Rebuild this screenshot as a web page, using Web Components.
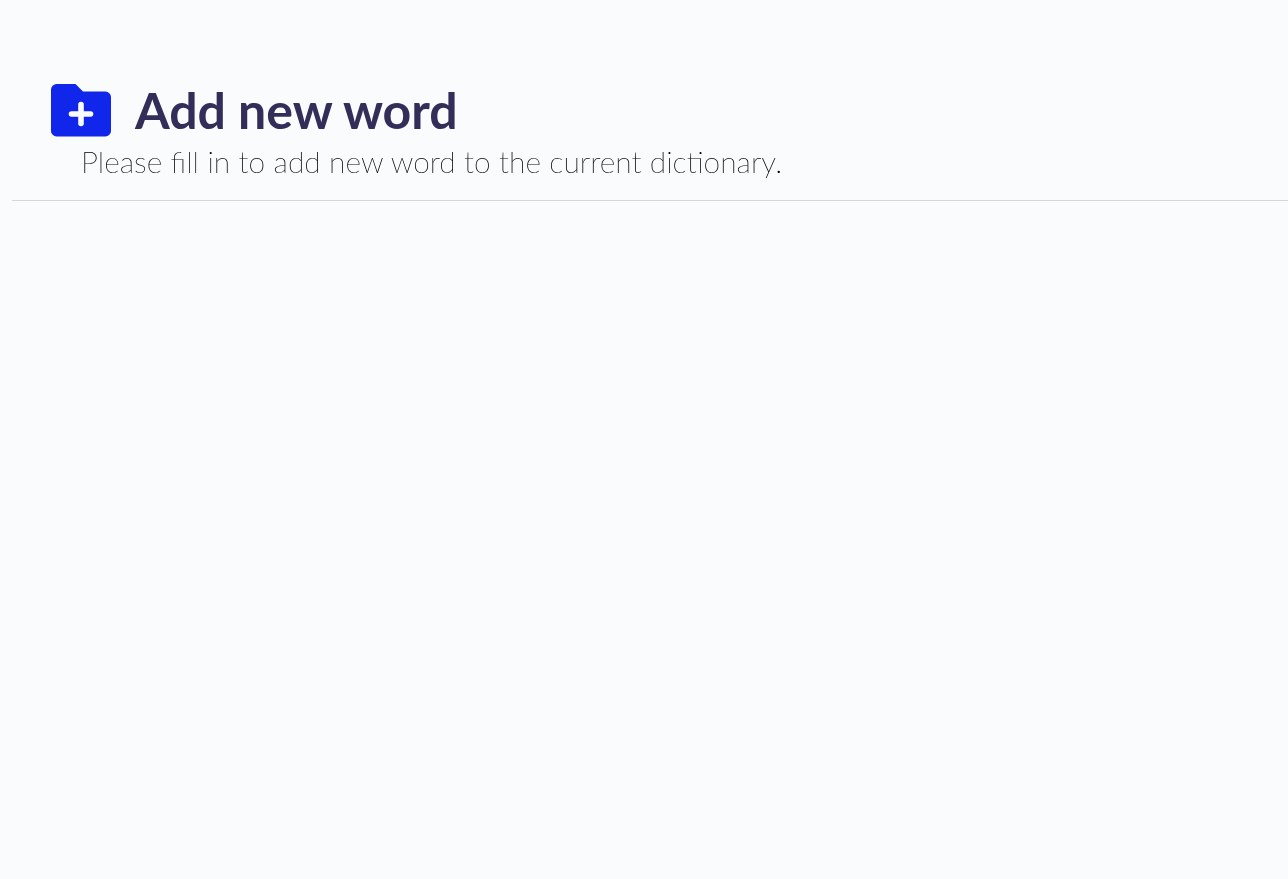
<!DOCTYPE html>
<html lang="en">
<head>
<meta charset="utf-8">
<title>Add new word</title>
<style>
  body { margin: 0; background: #fafbfd; font-family: Lato, sans-serif; }
</style>
</head>
<body>
<word-page>
  <page-header>
    <folder-plus-icon slot="icon"></folder-plus-icon>
    <span slot="title">Add new word</span>
    <span slot="subtitle">Please fill in to add new word to the current dictionary.</span>
  </page-header>
</word-page>
<script>
  const define = (name, html) => customElements.define(name, class extends HTMLElement {
    constructor() {
      super();
      this.attachShadow({ mode: "open" }).innerHTML = html;
    }
  });

  define("word-page", `
    <style>
      :host { display: block; min-height: 100vh; box-sizing: border-box; padding: 80px 0 0 12px; }
    </style>
    <main><slot></slot></main>`);

  define("folder-plus-icon", `
    <style>
      :host { display: block; width: 60px; height: 53px; }
      svg { display: block; width: 100%; height: 100%; }
    </style>
    <svg viewBox="0 0 60 53" aria-hidden="true">
      <path fill="#1026eb" d="M5.600 0H24.500L32 7.500H54.400A5.600 5.600 0 0 1 60 13.100V46.900A5.600 5.600 0 0 1 54.400 52.500H5.600A5.600 5.600 0 0 1 0 46.900V5.600A5.600 5.600 0 0 1 5.600 0Z"/>
      <path stroke="#fafbfd" stroke-width="5.600" stroke-linecap="round" d="M20.500 30H39.500M30 20.500V39.500"/>
    </svg>`);

  define("page-header", `
    <style>
      :host { display: block; border-bottom: 1px solid #d6d7d9; padding-bottom: 18px; }
      header { will-change: transform; }
      .heading { display: flex; align-items: center; gap: 24px; padding-left: 39px; }
      h1 { margin: 0; color: #332e59; font-size: 50px; line-height: 60px; font-weight: 700; }
      p { margin: 0; padding-left: 69px; color: #000; font-family: "Lato Thin", Lato, sans-serif; font-size: 30px; line-height: 42px; }
    </style>
    <header>
      <div class="heading"><slot name="icon"></slot><h1><slot name="title"></slot></h1></div>
      <p><slot name="subtitle"></slot></p>
    </header>`);
</script>
</body>
</html>
